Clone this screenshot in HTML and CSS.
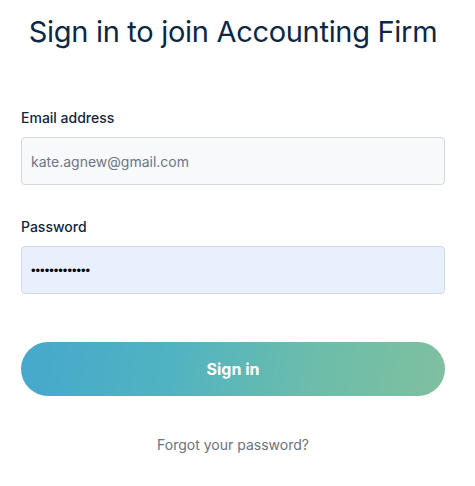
FILE: index.html
```html
<!DOCTYPE html>
<html>
<head>
<meta charset="utf-8">
<link rel="stylesheet" href="styles.css">
</head>
<body>
<main class="page">
  <h1 class="title">Sign in to join Accounting Firm</h1>
  <form class="form">
    <label class="field">
      <span class="label">Email address</span>
      <input class="input" type="email" value="kate.agnew@gmail.com">
    </label>
    <label class="field">
      <span class="label">Password</span>
      <input class="input input-filled" type="password" value="kateagnew1234">
    </label>
    <button class="btn" type="button">Sign in</button>
  </form>
  <a class="forgot" href="#">Forgot your password?</a>
</main>
</body>
</html>
```

FILE: styles.css
```css
* { box-sizing: border-box; }
html, body { margin: 0; padding: 0; background: #fff; }
body { font-family: Inter, "Noto Sans", sans-serif; }
.page {
  width: 475px;
  padding: 0 30px 0 21px;
  display: flex;
  flex-direction: column;
}
.title {
  margin: 13px -20px 0;
  font-size: 29px;
  font-weight: 400;
  line-height: 38px;
  letter-spacing: -0.3px;
  color: #0d2847;
  text-align: center;
  white-space: nowrap;
}
.form {
  margin-top: 57px;
  display: flex;
  flex-direction: column;
}
.field {
  display: flex;
  flex-direction: column;
  margin-bottom: 32px;
}
.label {
  font-size: 14px;
  line-height: 20px;
  font-weight: 500;
  color: #132640;
  margin-bottom: 9px;
}
.input {
  height: 48px;
  width: 100%;
  border: 1px solid #d4d9df;
  border-radius: 4px;
  background: #f8f9fb;
  padding: 0 9px;
  font-family: Inter, sans-serif;
  font-size: 14px;
  color: #6b7689;
  outline: none;
}
.input-filled {
  background: #e8f0fd;
  color: #000;
  font-family: "Liberation Sans", sans-serif;
  font-size: 13px;
}
.btn {
  margin-top: 16px;
  height: 54px;
  width: 100%;
  border: none;
  border-radius: 27px;
  background: linear-gradient(100deg, #46a8cc 0%, #50b3c2 35%, #6dbdaa 70%, #7fc09f 100%);
  color: #fff;
  font-family: Inter, sans-serif;
  font-weight: 700;
  font-size: 16px;
  cursor: pointer;
}
.forgot {
  margin-top: 39px;
  align-self: center;
  font-size: 14px;
  line-height: 20px;
  color: #6b7280;
  text-decoration: none;
}
```
